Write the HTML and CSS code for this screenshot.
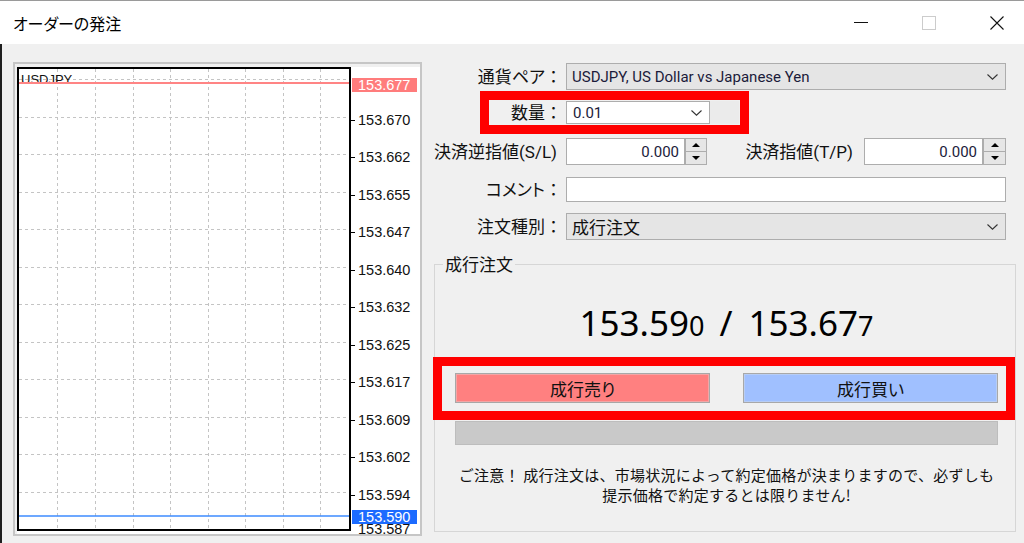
FILE: index.html
```html
<!DOCTYPE html>
<html lang="ja">
<head>
<meta charset="utf-8">
<title>オーダーの発注</title>
<link rel="stylesheet" href="styles.css">
</head>
<body>
<div class="window">
  <header class="titlebar">
    <span class="title">オーダーの発注</span>
    <div class="winctrls">
      <svg class="ctl" width="14" height="14" viewBox="0 0 14 14"><path d="M0 6.5H14" stroke="#111" stroke-width="1"/></svg>
      <svg class="ctl" width="14" height="14" viewBox="0 0 14 14"><rect x="0.5" y="0.5" width="13" height="13" fill="none" stroke="#cccccc"/></svg>
      <svg class="ctl" width="14" height="14" viewBox="0 0 14 14"><path d="M0.5 0.5L13.5 13.5M13.5 0.5L0.5 13.5" stroke="#111" stroke-width="1.1"/></svg>
    </div>
  </header>
  <main class="content">
    <div class="chart">
      <svg width="403" height="467" viewBox="0 0 403 467">
        <rect width="403" height="467" fill="#ffffff"/>
        <g stroke="#c4c4c4" stroke-width="1" stroke-dasharray="3 3" fill="none">
          <path d="M40.5 2V462M78.5 2V462M116.5 2V462M153.5 2V462M191.5 2V462M228.5 2V462M266.5 2V462M303.5 2V462"/>
          <path d="M2 12.5H333M2 50.5H333M2 87.5H333M2 125.5H333M2 162.5H333M2 200.5H333M2 237.5H333M2 275.5H333M2 312.5H333M2 350.5H333M2 387.5H333M2 425.5H333"/>
        </g>
        <text class="sym" x="4" y="17">USDJPY</text>
        <path d="M2 16H334" stroke="#ff8484" stroke-width="2"/>
        <path d="M2 449H334" stroke="#3d8bff" stroke-width="1.5"/>
        <rect x="1" y="1" width="332" height="462" fill="none" stroke="#000" stroke-width="2"/>
        <g stroke="#000" stroke-width="1">
          <path d="M334 53.5H338M334 90.5H338M334 128.5H338M334 165.5H338M334 203.5H338M334 240.5H338M334 278.5H338M334 315.5H338M334 353.5H338M334 390.5H338M334 428.5H338"/>
        </g>
        <g class="axis">
          <text x="341" y="58">153.670</text>
          <text x="341" y="95">153.662</text>
          <text x="341" y="133">153.655</text>
          <text x="341" y="170">153.647</text>
          <text x="341" y="208">153.640</text>
          <text x="341" y="245">153.632</text>
          <text x="341" y="283">153.625</text>
          <text x="341" y="320">153.617</text>
          <text x="341" y="358">153.609</text>
          <text x="341" y="395">153.602</text>
          <text x="341" y="433">153.594</text>
          <text x="341" y="467">153.587</text>
        </g>
        <rect x="335" y="11" width="65" height="14" fill="#ff7c7c"/>
        <text class="axis tagtext" x="341" y="23">153.677</text>
        <rect x="335" y="443" width="65" height="14" fill="#1c6bff"/>
        <text class="axis tagtext" x="341" y="455">153.590</text>
      </svg>
    </div>

    <section class="panel">
      <div class="row r1">
        <label class="lbl"><span class="t">通貨ペア</span>：</label>
        <div class="select wide">
          <span class="val">USDJPY, US Dollar vs Japanese Yen</span>
          <svg class="chev" width="11" height="6" viewBox="0 0 11 6"><path d="M0.5 0.5L5.5 5.2L10.5 0.5" fill="none" stroke="#333" stroke-width="1.1"/></svg>
        </div>
      </div>

      <div class="row r2">
        <label class="lbl"><span class="t">数量</span>：</label>
        <div class="select qty">
          <span class="val">0.01</span>
          <svg class="chev" width="11" height="6" viewBox="0 0 11 6"><path d="M0.5 0.5L5.5 5.2L10.5 0.5" fill="none" stroke="#333" stroke-width="1.1"/></svg>
        </div>
        <div class="qty-side"></div>
      </div>

      <div class="row r3">
        <label class="lbl sl"><span class="t">決済逆指値(S/L)</span></label>
        <div class="num">0.000</div>
        <div class="spin"><span><i class="tri-up"></i></span><span><i class="tri-down"></i></span></div>
        <div class="tp">
          <label class="lbl-tp"><span class="t">決済指値(T/P)</span></label>
          <div class="num">0.000</div>
          <div class="spin"><span><i class="tri-up"></i></span><span><i class="tri-down"></i></span></div>
        </div>
      </div>

      <div class="row r4">
        <label class="lbl"><span class="t">コメント</span>：</label>
        <div class="text-input"></div>
      </div>

      <div class="row r5">
        <label class="lbl"><span class="t">注文種別</span>：</label>
        <div class="select wide">
          <span class="val jp">成行注文</span>
          <svg class="chev" width="11" height="6" viewBox="0 0 11 6"><path d="M0.5 0.5L5.5 5.2L10.5 0.5" fill="none" stroke="#333" stroke-width="1.1"/></svg>
        </div>
      </div>

      <fieldset class="group">
        <legend>成行注文</legend>
        <div class="gbody">
          <div class="price">153.59<span class="small">0</span><span class="sep">/</span>153.67<span class="small">7</span></div>
          <div class="btns">
            <div class="btn sell">成行売り</div>
            <div class="btn buy">成行買い</div>
          </div>
          <div class="bar"></div>
          <p class="notice">ご注意！ 成行注文は、市場状況によって約定価格が決まりますので、必ずしも<br>提示価格で約定するとは限りません!</p>
        </div>
      </fieldset>

      <div class="mark mark-qty"></div>
      <div class="mark mark-btns"></div>
    </section>
  </main>
</div>
</body>
</html>
```

FILE: styles.css
```css
* { box-sizing: border-box; }
html, body { margin: 0; padding: 0; }
body {
  background: #f0f0f0;
  font-family: "Roboto", "Noto Sans CJK JP", sans-serif;
  color: #111;
}
.window {
  width: 1024px;
  height: 543px;
  overflow: hidden;
  display: flex;
  flex-direction: column;
  background: #f0f0f0;
}
.titlebar {
  height: 44px;
  flex: none;
  background: #ffffff;
  border-top: 1px solid #9a9a9a;
  display: flex;
  align-items: center;
  padding-left: 13px;
}
.title {
  font-family: "Noto Sans CJK JP", sans-serif;
  font-size: 16px;
  line-height: 20px;
  font-feature-settings: "palt";
  color: #000;
}
.winctrls {
  margin-left: auto;
  display: flex;
  align-items: center;
  gap: 54px;
  padding-right: 20px;
}
.ctl { display: block; }

.content {
  flex: 1;
  display: flex;
  align-items: flex-start;
  border-left: 2px solid #1f1f1f;
}
.chart {
  margin: 18px 0 0 11px;
  border: 2px solid #c6c6c6;
  padding: 3px 0 0 2px;
  line-height: 0;
  flex: none;
}
.chart svg { display: block; }
.chart .sym { font-family: "Liberation Sans", sans-serif; font-size: 13px; fill: #111; }
.chart .axis { font-family: "Liberation Sans", sans-serif; font-size: 14.5px; fill: #111; }
.chart .tagtext { fill: #ffffff; }

.panel {
  position: relative;
  width: 582px;
  margin-left: 12px;
  padding-top: 19px;
  flex: none;
}
.row {
  display: flex;
  align-items: center;
  padding-right: 10px;
}
.r1 { height: 27px; }
.r2 { height: 23px; margin-top: 11px; }
.r3 { height: 27px; margin-top: 14px; }
.r4 { height: 25px; margin-top: 12px; }
.r5 { height: 27px; margin-top: 11px; }

.lbl {
  width: 128px;
  flex: none;
  margin-right: 4px;
  text-align: right;
  font-size: 17px;
  line-height: 20px;
  white-space: nowrap;
  color: #111;
}
.lbl.sl { padding-right: 5px; }
.t { font-feature-settings: "palt"; }

.select {
  height: 100%;
  display: flex;
  align-items: center;
  background: #e5e5e5;
  border: 1px solid #adadad;
  padding: 0 7px 0 5px;
  font-size: 15px;
  color: #1b1b3a;
}
.select .val { flex: 1; white-space: nowrap; }
.select .val.jp { font-size: 17px; color: #111; }
.chev { display: block; flex: none; }
.wide { flex: 1; }
.qty {
  width: 144px;
  flex: none;
  background: #ffffff;
  padding-left: 6px;
}
.qty-side {
  width: 29px;
  height: 100%;
  background: #ebebeb;
}

.num {
  width: 119px;
  height: 100%;
  flex: none;
  background: #ffffff;
  border: 1px solid #adadad;
  display: flex;
  align-items: center;
  justify-content: flex-end;
  padding-right: 5px;
  font-size: 15px;
  color: #1b1b3a;
}
.spin {
  width: 22px;
  height: 100%;
  flex: none;
  border: 1px solid #adadad;
  background: #e6e6e6;
  display: flex;
  flex-direction: column;
}
.spin span {
  flex: 1;
  display: flex;
  align-items: center;
  justify-content: center;
}
.spin span + span { border-top: 1px solid #adadad; }
.tri-up, .tri-down {
  display: block;
  width: 0;
  height: 0;
  border-left: 4px solid transparent;
  border-right: 4px solid transparent;
}
.tri-up { border-bottom: 4px solid #000; }
.tri-down { border-top: 4px solid #000; }
.tp {
  margin-left: auto;
  height: 100%;
  display: flex;
  align-items: center;
}
.tp .spin { width: 23px; }
.lbl-tp {
  font-size: 17px;
  line-height: 20px;
  margin-right: 11px;
  white-space: nowrap;
}
.text-input {
  flex: 1;
  height: 100%;
  background: #ffffff;
  border: 1px solid #adadad;
}

.group {
  margin: 14px 0 0;
  padding: 0;
  border: 1px solid #d6d6d6;
  min-width: 0;
}
.group legend {
  margin-left: 8px;
  padding: 0 2px;
  font-family: "Noto Sans CJK JP", sans-serif;
  font-size: 17px;
  line-height: 20px;
  color: #111;
}
.gbody { padding: 0 17px 26px 20px; }
.price {
  margin-top: 32px;
  height: 34px;
  text-align: center;
  font-family: "Noto Sans", sans-serif;
  font-size: 35px;
  line-height: 34px;
  white-space: nowrap;
  color: #000;
}
.price .small { font-size: 27px; line-height: 27px; }
.price .sep { margin: 0 16px 0 15px; }
.btns {
  margin-top: 33px;
  display: flex;
  justify-content: space-between;
}
.btn {
  width: 255px;
  height: 30px;
  border: 1px solid #a8a8a8;
  display: flex;
  align-items: center;
  justify-content: center;
  font-family: "Noto Sans CJK JP", sans-serif;
  font-size: 17px;
  font-feature-settings: "palt";
  color: #111;
}
.sell { background: #ff8080; box-shadow: inset 0 0 0 1px #f3a6a6; }
.buy { background: #a0c0ff; box-shadow: inset 0 0 0 1px #b7cdf5; }
.bar {
  margin-top: 18px;
  height: 24px;
  background: #c9c9c9;
  border: 1px solid #bdbdbd;
}
.notice {
  margin: 20px 0 0;
  text-align: center;
  font-family: "Noto Sans CJK JP", sans-serif;
  font-size: 15px;
  line-height: 20px;
  letter-spacing: 0.25px;
  color: #111;
}

.mark {
  position: absolute;
  border: 9px solid #ff0000;
  pointer-events: none;
}
.mark-qty { left: 46px; top: 47px; width: 269px; height: 43px; }
.mark-btns { left: -1px; top: 313px; width: 582px; height: 63px; }
```
